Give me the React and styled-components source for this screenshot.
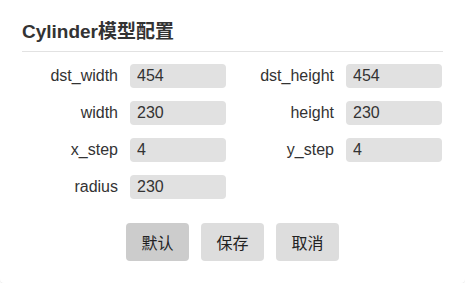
import { Fragment } from "react";
import styled, { createGlobalStyle } from "styled-components";

const GlobalStyle = createGlobalStyle`
  html, body {
    margin: 0;
    padding: 0;
    background: #ffffff;
  }
  body {
    font-family: "Liberation Sans", "Noto Sans CJK SC", sans-serif;
    color: #333333;
  }
`;

const Dialog = styled.div`
  box-sizing: border-box;
  width: 465px;
  height: 283px;
  padding: 21px 22px 0;
  background: #ffffff;
  border-radius: 0 0 4px 4px;
  box-shadow: 0 1px 0 rgba(0, 0, 0, 0.08);
`;

const Title = styled.h2`
  margin: 0;
  padding-bottom: 8px;
  font-size: 19px;
  line-height: 22px;
  font-weight: bold;
  color: #333333;
  border-bottom: 1px solid #e2e2e2;
`;

const Form = styled.div`
  display: grid;
  grid-template-columns: 96px 96px 96px 96px;
  column-gap: 12px;
  row-gap: 13px;
  margin-top: 12px;
`;

const Label = styled.label`
  font-size: 16px;
  line-height: 24px;
  text-align: right;
  color: #333333;
`;

const Input = styled.input`
  box-sizing: border-box;
  width: 96px;
  height: 24px;
  padding: 0 7px;
  border: none;
  border-radius: 4px;
  background: #e1e1e1;
  font-family: "Liberation Sans", sans-serif;
  font-size: 16px;
  color: #333333;
  outline: none;
`;

const Actions = styled.div`
  display: flex;
  justify-content: center;
  gap: 12px;
  margin-top: 24px;
`;

const Button = styled.button`
  width: 63px;
  height: 38px;
  border: none;
  border-radius: 4px;
  background: ${(p) => (p.$active ? "#cccccc" : "#dddddd")};
  font-family: "Liberation Sans", "Noto Sans CJK SC", sans-serif;
  font-size: 16px;
  color: #222222;
  cursor: pointer;
`;

const fields = [
  ["dst_width", "454"],
  ["dst_height", "454"],
  ["width", "230"],
  ["height", "230"],
  ["x_step", "4"],
  ["y_step", "4"],
  ["radius", "230"],
];

export default function App() {
  return (
    <>
      <GlobalStyle />
      <Dialog>
        <Title>Cylinder模型配置</Title>
        <Form>
          {fields.map(([name, value]) => (
            <Fragment key={name}>
              <Label>{name}</Label>
              <Input defaultValue={value} />
            </Fragment>
          ))}
        </Form>
        <Actions>
          <Button $active>默认</Button>
          <Button>保存</Button>
          <Button>取消</Button>
        </Actions>
      </Dialog>
    </>
  );
}
